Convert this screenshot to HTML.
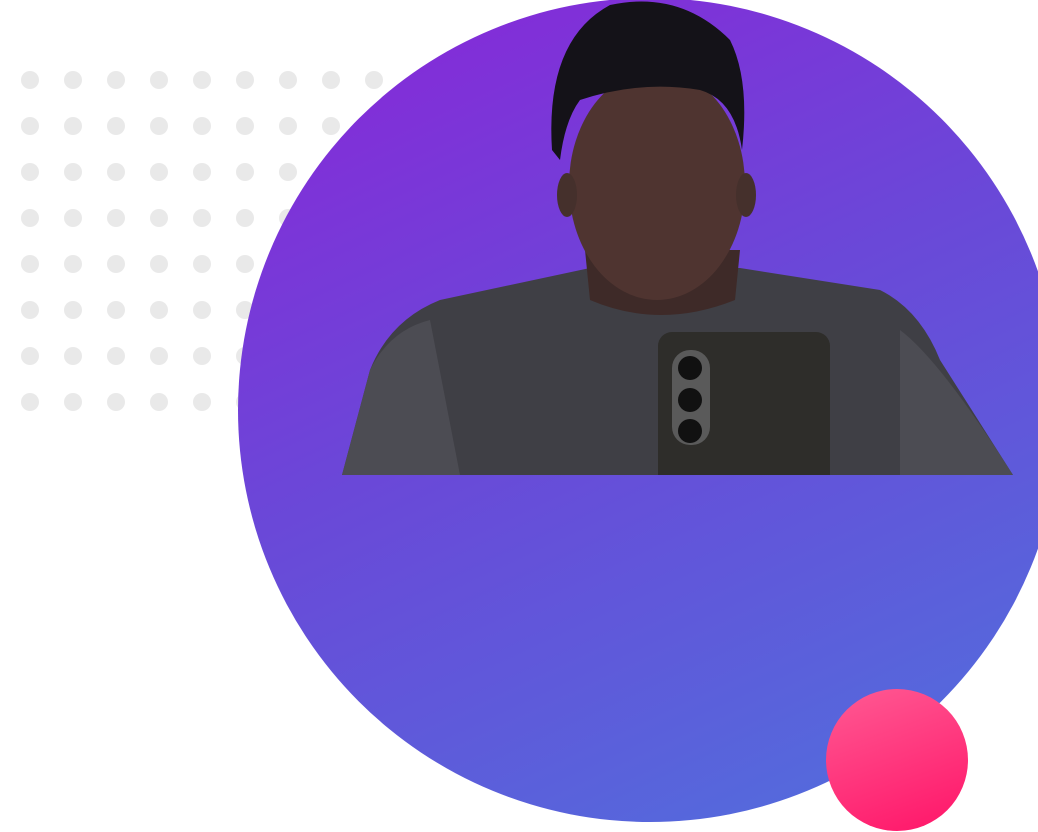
<!DOCTYPE html>
<html><head><meta charset="utf-8"><style>
html,body{margin:0;padding:0;background:#fff;width:1038px;height:832px;overflow:hidden;position:relative;font-family:"Liberation Sans",sans-serif}
.dots{position:absolute;left:0;top:0}
.big{position:absolute;left:238px;top:-2px;width:824px;height:824px;border-radius:50%;background:linear-gradient(155deg,#8a25d8 0%,#6a48d8 45%,#4f72dd 100%);overflow:hidden}
.pink{position:absolute;left:826px;top:689px;width:142px;height:142px;border-radius:50%;background:linear-gradient(160deg,#ff5a93,#ff1468)}
</style></head><body>
<svg class="dots" width="400" height="420" style="position:absolute;left:0;top:0">
<g fill="#e9e9e9" id="g"></g>
</svg>
<div class="big">
<svg width="824" height="824" style="position:absolute;left:0;top:0">
 <defs><clipPath id="c"><rect x="0" y="0" width="1100" height="475"/></clipPath></defs>
 <g transform="translate(-238,2)" clip-path="url(#c)">
  <path d="M342 475 L370 370 Q390 320 440 300 L590 268 L740 268 L880 290 Q920 310 940 360 L1013 475 Z" fill="#3f3f45"/>
  <path d="M342 475 L370 370 Q390 330 430 320 L460 475 Z" fill="#4c4c53"/>
  <path d="M900 330 Q940 360 1013 475 L900 475 Z" fill="#4c4c53"/>
  <path d="M585 250 L740 250 L735 300 Q660 330 590 300 Z" fill="#3e2a28"/>
  <ellipse cx="657" cy="185" rx="88" ry="115" fill="#4f3430"/>
  <path d="M552 150 Q545 40 610 5 Q680 -10 730 40 Q750 80 742 150 Q735 100 700 90 Q640 80 580 100 Q565 120 560 160 Z" fill="#141218"/>
  <ellipse cx="567" cy="195" rx="10" ry="22" fill="#45302c"/>
  <ellipse cx="746" cy="195" rx="10" ry="22" fill="#45302c"/>
  <rect x="658" y="332" width="172" height="170" rx="14" fill="#2e2d2a"/>
  <rect x="672" y="350" width="38" height="95" rx="18" fill="#5a5a5a"/>
  <circle cx="690" cy="368" r="12" fill="#111"/>
  <circle cx="690" cy="400" r="12" fill="#111"/>
  <circle cx="690" cy="431" r="12" fill="#111"/>
 </g>
</svg>
</div>
<div class="pink"></div>
<script>
var g=document.getElementById('g'),s='';
for(var r=0;r<8;r++)for(var c=0;c<9;c++){s+='<circle cx="'+(30+c*43)+'" cy="'+(80+r*46)+'" r="9"/>';}
g.innerHTML=s;
</script>
</body></html>
